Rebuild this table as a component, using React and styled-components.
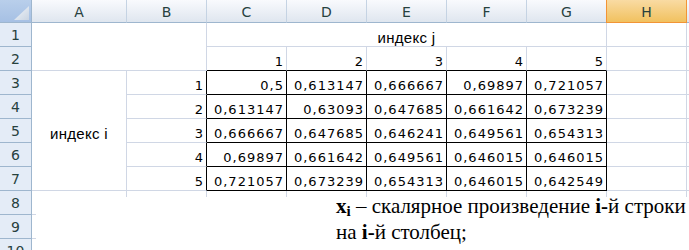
import React from 'react';
import styled, { createGlobalStyle } from 'styled-components';

const GRID = '#d0d7e5';
const INK = '#000';

const data = [
  ['0,5', '0,613147', '0,666667', '0,69897', '0,721057'],
  ['0,613147', '0,63093', '0,647685', '0,661642', '0,673239'],
  ['0,666667', '0,647685', '0,646241', '0,649561', '0,654313'],
  ['0,69897', '0,661642', '0,649561', '0,646015', '0,646015'],
  ['0,721057', '0,673239', '0,654313', '0,646015', '0,642549'],
];

const letters = ['A', 'B', 'C', 'D', 'E', 'F', 'G', 'H', 'I'];

export default function App() {
  return (
    <>
      <Global />
      <Sheet>
        <Corner>
          <svg width="31" height="22" viewBox="0 0 31 22">
            <defs>
              <linearGradient id="tri" x1="0" y1="0" x2="1" y2="1">
                <stop offset="0" stopColor="#f4f7fb" />
                <stop offset="1" stopColor="#c9d4e2" />
              </linearGradient>
            </defs>
            <polygon points="14,20 29,6 29,20" fill="url(#tri)" />
          </svg>
        </Corner>
        {letters.map((l, i) => (
          <ColHead key={l} $col={i + 2} $active={l === 'H'}>
            {l}
          </ColHead>
        ))}
        {Array.from({ length: 10 }, (_, i) => (
          <RowHead key={i} $row={i + 2}>
            {i + 1}
          </RowHead>
        ))}

        {/* rows 1-2 */}
        <Cell $row={2} $col={2} $rs={2} $cs={2} />
        <Cell $row={2} $col={4} $cs={5} $align="center" $label>
          индекс j
        </Cell>
        <Cell $row={2} $col={9} />
        <Cell $row={2} $col={10} />
        {[1, 2, 3, 4, 5].map((n, i) => (
          <Cell key={n} $row={3} $col={4 + i} $bb={INK}>
            {n}
          </Cell>
        ))}
        <Cell $row={3} $col={9} />
        <Cell $row={3} $col={10} />

        {/* rows 3-7 */}
        <Cell $row={4} $col={2} $rs={5} $align="center" $valign="center" $label>
          индекс i
        </Cell>
        {data.map((row, r) => (
          <React.Fragment key={r}>
            <Cell $row={4 + r} $col={3} $br={INK}>
              {r + 1}
            </Cell>
            {row.map((v, c) => (
              <Cell key={c} $row={4 + r} $col={4 + c} $br={INK} $bb={INK}>
                {v}
              </Cell>
            ))}
            <Cell $row={4 + r} $col={9} />
            <Cell $row={4 + r} $col={10} />
          </React.Fragment>
        ))}

        {/* rows 8-10 */}
        {[9, 10, 11].map((r) =>
          letters.map((l, c) => <Cell key={r + l} $row={r} $col={c + 2} />)
        )}

        <Picture>
          <Note>
            <b>
              x<Sub>i</Sub>
            </b>{' '}
            – скалярное произведение <b>i-</b>й строки
            <br />
            на <b>i-</b>й столбец;
          </Note>
        </Picture>
      </Sheet>
    </>
  );
}

// Styles

const Global = createGlobalStyle`
  html, body {
    margin: 0;
    padding: 0;
    background: #fff;
    overflow: hidden;
  }
`;

const Sheet = styled.div`
  position: relative;
  display: grid;
  grid-template-columns: 32px 95px repeat(8, 80px);
  grid-template-rows: 23px repeat(10, 24px);
  width: 689px;
  height: 250px;
  overflow: hidden;
  font-family: 'DejaVu Sans', Verdana, sans-serif;
  font-size: 13px;
  color: #000;
`;

const Corner = styled.div`
  grid-column: 1;
  grid-row: 1;
  box-sizing: border-box;
  background: linear-gradient(#b9cfeb, #a6c0e4);
  border-right: 1px solid #9eb6ce;
  border-bottom: 1px solid #9eb6ce;
  svg {
    display: block;
  }
`;

const ColHead = styled.div`
  grid-column: ${(p) => p.$col};
  grid-row: 1;
  box-sizing: border-box;
  display: flex;
  align-items: center;
  justify-content: center;
  padding-top: 1px;
  font-size: 14px;
  color: #27413e;
  background: ${(p) =>
    p.$active
      ? 'linear-gradient(#f9dba3, #f1c15f)'
      : 'linear-gradient(#f9fafd, #dfe6ef)'};
  border-right: 1px solid ${(p) => (p.$active ? '#f29436' : '#c5d3e3')};
  border-bottom: 1px solid ${(p) => (p.$active ? '#f29436' : '#9eb6ce')};
  ${(p) => p.$active && 'border-left: 1px solid #f29436; margin-left: -1px;'}
`;

const RowHead = styled.div`
  grid-column: 1;
  grid-row: ${(p) => p.$row};
  box-sizing: border-box;
  display: flex;
  align-items: center;
  justify-content: center;
  padding-top: 1px;
  font-size: 14px;
  color: #27413e;
  background: #e4ecf7;
  border-right: 1px solid #9eb6ce;
  border-bottom: 1px solid #9eb6ce;
`;

const Cell = styled.div`
  grid-column: ${(p) => p.$col} / span ${(p) => p.$cs || 1};
  grid-row: ${(p) => p.$row} / span ${(p) => p.$rs || 1};
  box-sizing: border-box;
  display: flex;
  align-items: ${(p) => (p.$valign === 'center' ? 'center' : 'flex-end')};
  justify-content: ${(p) => (p.$align === 'center' ? 'center' : 'flex-end')};
  padding: ${(p) => (p.$valign === 'center' ? '5px 3px 0' : '0 2px 1px')};
  font-family: ${(p) =>
    p.$label ? "'Liberation Sans', Arial, sans-serif" : "'DejaVu Sans', Verdana, sans-serif"};
  font-size: ${(p) => (p.$label ? '15px' : '13px')};
  letter-spacing: ${(p) => (p.$label ? '0.3px' : '1px')};
  line-height: 15px;
  white-space: nowrap;
  background: #fff;
  border-right: 1px solid ${(p) => p.$br || GRID};
  border-bottom: 1px solid ${(p) => p.$bb || GRID};
`;

const Picture = styled.div`
  position: absolute;
  left: 36px;
  top: 197px;
  right: 0;
  bottom: 0;
  background: #fff;
`;

const Note = styled.div`
  margin-top: -4px;
  padding-left: 300px;
  font-family: 'Liberation Serif', 'Times New Roman', serif;
  font-size: 21px;
  line-height: 26px;
  color: #000;
  white-space: nowrap;
`;

const Sub = styled.sub`
  font-size: 15px;
  vertical-align: -3px;
  line-height: 0;
`;
